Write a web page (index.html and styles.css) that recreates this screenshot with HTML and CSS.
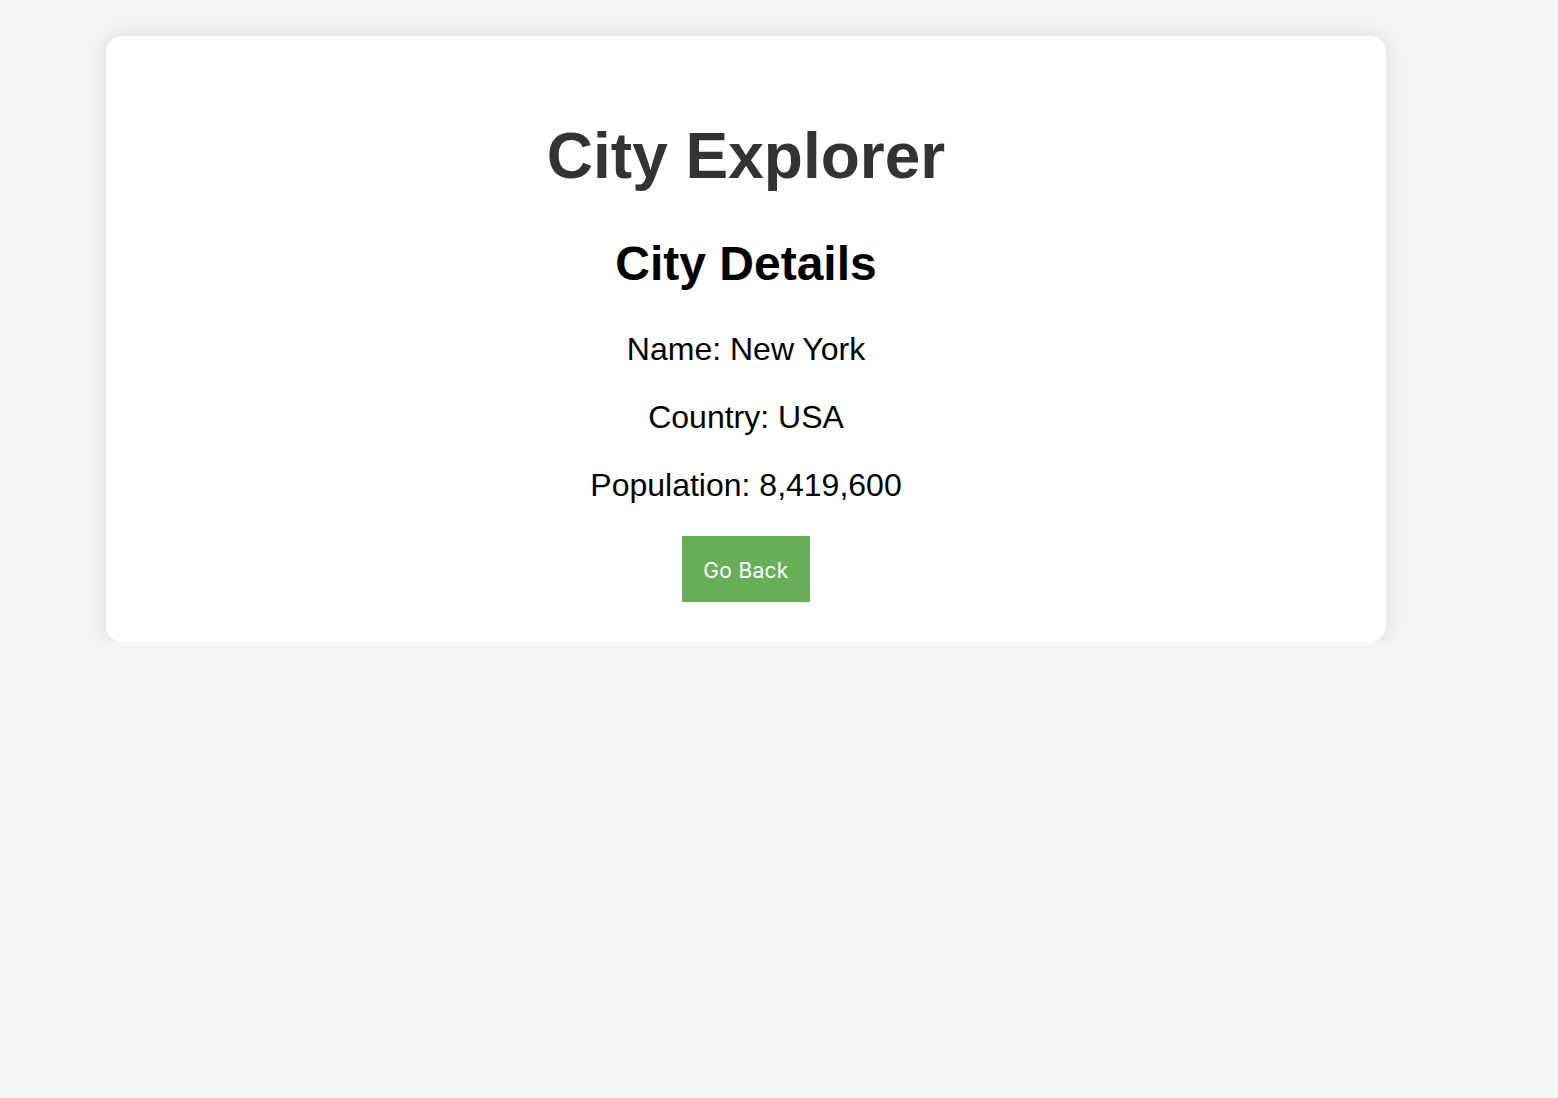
FILE: index.html
```html
<!DOCTYPE html>
<html lang="en">
<head>
<meta charset="utf-8">
<title>City Explorer</title>
<link rel="stylesheet" href="styles.css">
</head>
<body>
<main class="card">
  <h1 class="title">City Explorer</h1>
  <h2 class="subtitle">City Details</h2>
  <p class="detail">Name: New York</p>
  <p class="detail">Country: USA</p>
  <p class="detail">Population: 8,419,600</p>
  <div class="actions">
    <button class="back-btn" type="button">Go Back</button>
  </div>
</main>
</body>
</html>
```

FILE: styles.css
```css
html, body {
  margin: 0;
  padding: 0;
}

body {
  background: #f4f4f4;
  font-family: "Liberation Sans", Arial, sans-serif;
  padding: 36px 0 0 106px;
}

.card {
  box-sizing: border-box;
  width: 1280px;
  background: #ffffff;
  border-radius: 16px;
  box-shadow: 0 0 20px rgba(0, 0, 0, 0.1);
  padding: 40px;
  text-align: center;
  display: flow-root;
}

.title {
  font-size: 64px;
  font-weight: bold;
  color: #333333;
  margin: 42.9px 0;
}

.subtitle {
  font-size: 48px;
  font-weight: bold;
  color: #000000;
  margin: 39.8px 0;
}

.detail {
  font-size: 32px;
  color: #000000;
  margin: 31px 0;
}

.actions {
  margin-top: 32px;
  display: flex;
  justify-content: center;
}

.back-btn {
  font-family: Inter, "Noto Sans", sans-serif;
  font-size: 21px;
  line-height: 26px;
  letter-spacing: 0.3px;
  color: #ffffff;
  background: #69ae5b;
  border: none;
  border-radius: 0;
  padding: 22px 21px 18px;
  margin: 0;
  cursor: pointer;
}
```
